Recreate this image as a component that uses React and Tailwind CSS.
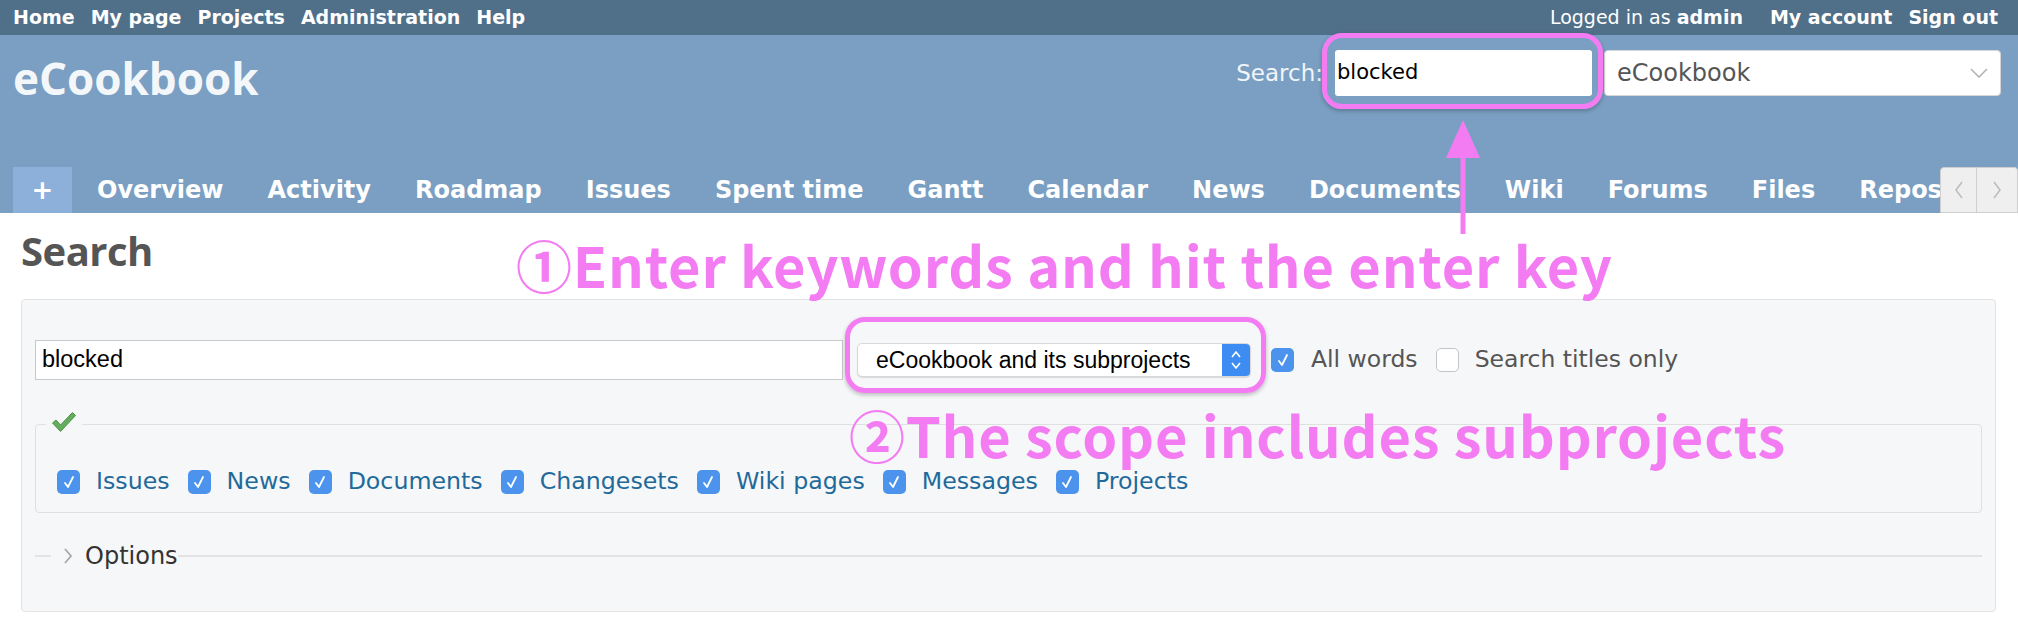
import React from 'react';

const PINK = '#f47cf3';

const TOP_LINKS = ['Home', 'My page', 'Projects', 'Administration', 'Help'];
const TABS = ['Overview', 'Activity', 'Roadmap', 'Issues', 'Spent time', 'Gantt', 'Calendar', 'News', 'Documents', 'Wiki', 'Forums', 'Files', 'Repository'];
const SCOPES = ['Issues', 'News', 'Documents', 'Changesets', 'Wiki pages', 'Messages', 'Projects'];

const CheckBox = ({ checked = true }) =>
  checked ? (
    <span className="w-[23px] h-[24px] rounded-[5px] bg-[#4b93ec] flex items-center justify-center shrink-0">
      <svg width="12" height="14" viewBox="0 0 12 14">
        <path d="M2 8 L5 12 L10 2" fill="none" stroke="#fff" strokeWidth="1.8" strokeLinecap="round" strokeLinejoin="round" />
      </svg>
    </span>
  ) : (
    <span className="block w-[23px] h-[24px] rounded-[5px] bg-white border border-[#c4c4c4] shrink-0" />
  );

export default function App() {
  return (
    <div className="w-[2018px] h-[630px] bg-white relative overflow-hidden font-['DejaVu_Sans',Verdana,sans-serif]">
      {/* Top menu */}
      <div className="h-[35px] bg-[#506f89] flex items-center justify-between pl-[13px] pr-[20px] text-white text-[19px]">
        <div className="flex gap-[16px] font-bold">
          {TOP_LINKS.map(l => <span key={l}>{l}</span>)}
        </div>
        <div className="flex items-center">
          <span>Logged in as <b>admin</b></span>
          <span className="font-bold ml-[27px]">My account</span>
          <span className="font-bold ml-[16px]">Sign out</span>
        </div>
      </div>

      {/* Header */}
      <div className="bg-[#7a9fc2]">
        <div className="h-[132px] flex justify-between items-start">
          <h1 className="ml-[13px] mt-[21px] text-[44px] leading-none font-bold text-[#f4f7fa] font-['Open_Sans',sans-serif]">eCookbook</h1>
          <div className="flex items-center mt-[15px] mr-[17px]">
            <span className="text-[23px] text-[#f1f5f9] mr-[12px]">Search:</span>
            <div className="w-[257px] h-[46px] bg-white rounded-[3px] flex items-center pl-[2px] text-[21px] text-black">blocked</div>
            <div className="ml-[12px] w-[397px] h-[46px] bg-white rounded-[4px] border border-[#d6d6d6] flex items-center justify-between pl-[12px] pr-[12px] text-[24px] text-[#555]">
              <span>eCookbook</span>
              <svg width="18" height="12" viewBox="0 0 18 12">
                <path d="M1 2 L9 10 L17 2" fill="none" stroke="#b5b5b5" strokeWidth="1.6" />
              </svg>
            </div>
          </div>
        </div>

        {/* Tabs */}
        <div className="h-[46px] flex">
          <div className="flex flex-1 overflow-hidden">
            <div className="ml-[13px] w-[59px] bg-[#8db0da] flex items-center justify-center text-white text-[26px] font-bold shrink-0">+</div>
            <div className="flex ml-[3px]">
              {TABS.map(t => (
                <span key={t} className="px-[22px] flex items-center text-white font-bold text-[24px] whitespace-nowrap">{t}</span>
              ))}
            </div>
          </div>
          <div className="w-[78px] flex shrink-0">
            <div className="w-[37px] bg-[#efefef] border border-[#cfcfcf] rounded-tl-[4px] flex items-center justify-center">
              <svg width="10" height="20" viewBox="0 0 10 20"><path d="M8 2 L2 10 L8 18" fill="none" stroke="#bdbdbd" strokeWidth="1.6" /></svg>
            </div>
            <div className="w-[41px] bg-[#efefef] border border-l-0 border-[#cfcfcf] rounded-tr-[4px] flex items-center justify-center">
              <svg width="10" height="20" viewBox="0 0 10 20"><path d="M2 2 L8 10 L2 18" fill="none" stroke="#bdbdbd" strokeWidth="1.6" /></svg>
            </div>
          </div>
        </div>
      </div>

      {/* Content */}
      <div className="pl-[21px] pr-[22px]">
        <h2 className="mt-[18px] text-[40px] leading-none font-bold text-[#555] tracking-[-0.5px] font-['Open_Sans',sans-serif]">Search</h2>

        <div className="mt-[28px] h-[313px] bg-[#f6f7f8] border border-[#e3e3e3] rounded-[4px] px-[13px]">
          {/* Query row */}
          <div className="flex items-center mt-[40px]">
            <div className="w-[808px] h-[40px] bg-white border border-[#c9c9c9] flex items-center pl-[6px] text-[23.5px] text-black font-['Liberation_Sans',Arial,sans-serif]">blocked</div>
            <div className="ml-[14px] w-[394px] h-[34px] bg-white rounded-[5px] border border-[#d9d9d9] shadow-[0_1px_1px_rgba(0,0,0,0.12)] flex items-center justify-between pl-[18px] text-[23px] text-black font-['Liberation_Sans',Arial,sans-serif] overflow-hidden">
              <span>eCookbook and its subprojects</span>
              <span className="w-[28px] h-full bg-[#3d8cf3] flex items-center justify-center">
                <svg width="12" height="24" viewBox="0 0 12 24">
                  <path d="M2 9 L6 4 L10 9 M2 15 L6 20 L10 15" fill="none" stroke="#fff" strokeWidth="1.6" />
                </svg>
              </span>
            </div>
            <div className="ml-[20px]"><CheckBox /></div>
            <span className="ml-[17px] text-[23.5px] text-[#555]">All words</span>
            <div className="ml-[18px]"><CheckBox checked={false} /></div>
            <span className="ml-[16px] text-[23.5px] text-[#555]">Search titles only</span>
          </div>

          {/* Scope fieldset */}
          <div className="mt-[44px] h-[89px] border border-[#e0e0e0] rounded-[4px] relative">
            <div className="absolute -top-[14px] left-[10px] px-[5px] bg-[#f6f7f8]">
              <svg width="26" height="22" viewBox="0 0 26 22">
                <path d="M1.5 12 L5 9 L9.5 14 L21.5 1.5 L24.5 4.5 L9.5 20.5 Z" fill="#64ad5e" stroke="#4f9549" strokeWidth="1" strokeLinejoin="round" />
              </svg>
            </div>
            <div className="flex items-center pl-[21px] pt-[39px]">
              {SCOPES.map(s => (
                <div key={s} className="flex items-center mr-[18px]">
                  <CheckBox />
                  <span className="ml-[16px] text-[23.7px] text-[#1f6a9b]">{s}</span>
                </div>
              ))}
            </div>
          </div>

          {/* Options */}
          <div className="mt-[25px] flex items-center">
            <div className="w-[16px] h-[2px] bg-[#e3e3e3]" />
            <svg className="mx-[12px]" width="10" height="18" viewBox="0 0 10 18">
              <path d="M2 2 L8 9 L2 16" fill="none" stroke="#a8a8a8" strokeWidth="1.8" />
            </svg>
            <span className="text-[24px] text-[#333]">Options</span>
            <div className="flex-1 h-[2px] bg-[#e3e3e3]" />
          </div>
        </div>
      </div>

      {/* Annotations */}
      <div className="absolute left-[1322px] top-[33px] w-[281px] h-[76px] border-[5px] border-[#f47cf3] rounded-[20px] shadow-[0_2px_4px_rgba(0,0,0,0.25)]" />
      <div className="absolute left-[845px] top-[317px] w-[421px] h-[76px] border-[5px] border-[#f47cf3] rounded-[20px] shadow-[0_2px_4px_rgba(0,0,0,0.25)]" />
      <svg className="absolute left-[1444px] top-[118px]" width="38" height="118" viewBox="0 0 38 118">
        <path d="M19 2 L36 40 L2 40 Z" fill={PINK} />
        <rect x="16.5" y="38" width="5" height="78" fill={PINK} />
      </svg>
      <div className="absolute left-[516px] top-[236px] text-[56px] tracking-[0.8px] leading-none font-bold text-[#f47cf3] whitespace-nowrap font-['Noto_Sans_CJK_JP',sans-serif]">
        ①Enter keywords and hit the enter key
      </div>
      <div className="absolute left-[849px] top-[406px] text-[56px] tracking-[0.8px] leading-none font-bold text-[#f47cf3] whitespace-nowrap font-['Noto_Sans_CJK_JP',sans-serif]">
        ②The scope includes subprojects
      </div>
    </div>
  );
}
